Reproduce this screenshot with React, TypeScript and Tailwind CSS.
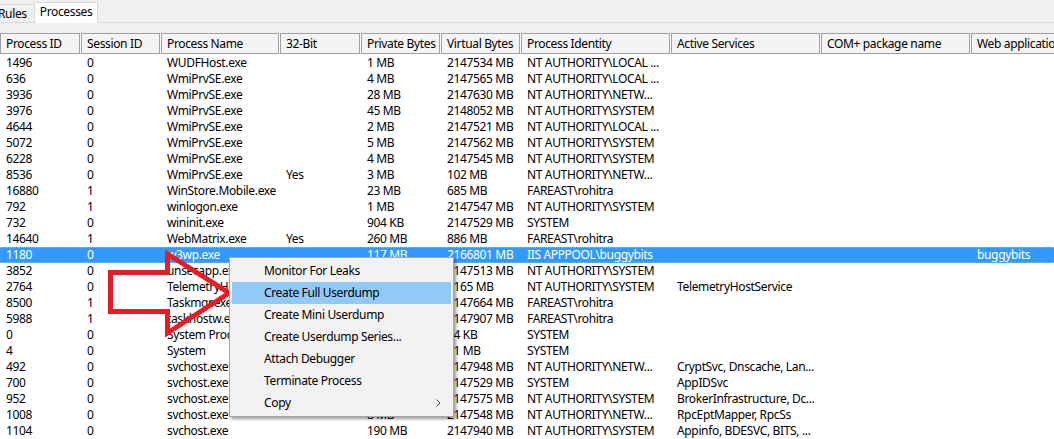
import React from "react";

type Row = {
  pid: string;
  sid: string;
  name: string;
  bit?: string;
  priv?: string;
  virt: string;
  ident: string;
  svc?: string;
  web?: string;
  sel?: boolean;
};

const rows: Row[] = [
  { pid: "1496", sid: "0", name: "WUDFHost.exe", priv: "1 MB", virt: "2147534 MB", ident: "NT AUTHORITY\\LOCAL ..." },
  { pid: "636", sid: "0", name: "WmiPrvSE.exe", priv: "4 MB", virt: "2147565 MB", ident: "NT AUTHORITY\\LOCAL ..." },
  { pid: "3936", sid: "0", name: "WmiPrvSE.exe", priv: "28 MB", virt: "2147630 MB", ident: "NT AUTHORITY\\NETW..." },
  { pid: "3976", sid: "0", name: "WmiPrvSE.exe", priv: "45 MB", virt: "2148052 MB", ident: "NT AUTHORITY\\SYSTEM" },
  { pid: "4644", sid: "0", name: "WmiPrvSE.exe", priv: "2 MB", virt: "2147521 MB", ident: "NT AUTHORITY\\LOCAL ..." },
  { pid: "5072", sid: "0", name: "WmiPrvSE.exe", priv: "5 MB", virt: "2147562 MB", ident: "NT AUTHORITY\\SYSTEM" },
  { pid: "6228", sid: "0", name: "WmiPrvSE.exe", priv: "4 MB", virt: "2147545 MB", ident: "NT AUTHORITY\\SYSTEM" },
  { pid: "8536", sid: "0", name: "WmiPrvSE.exe", bit: "Yes", priv: "3 MB", virt: "102 MB", ident: "NT AUTHORITY\\NETW..." },
  { pid: "16880", sid: "1", name: "WinStore.Mobile.exe", priv: "23 MB", virt: "685 MB", ident: "FAREAST\\rohitra" },
  { pid: "792", sid: "1", name: "winlogon.exe", priv: "1 MB", virt: "2147547 MB", ident: "NT AUTHORITY\\SYSTEM" },
  { pid: "732", sid: "0", name: "wininit.exe", priv: "904 KB", virt: "2147529 MB", ident: "SYSTEM" },
  { pid: "14640", sid: "1", name: "WebMatrix.exe", bit: "Yes", priv: "260 MB", virt: "886 MB", ident: "FAREAST\\rohitra" },
  { pid: "1180", sid: "0", name: "w3wp.exe", priv: "117 MB", virt: "2166801 MB", ident: "IIS APPPOOL\\buggybits", web: "buggybits", sel: true },
  { pid: "3852", sid: "0", name: "unsecapp.exe", priv: "2 MB", virt: "2147513 MB", ident: "NT AUTHORITY\\SYSTEM" },
  { pid: "2764", sid: "0", name: "TelemetryHost.exe", priv: "3 MB", virt: "2165 MB", ident: "NT AUTHORITY\\SYSTEM", svc: "TelemetryHostService" },
  { pid: "8500", sid: "1", name: "Taskmgr.exe", priv: "19 MB", virt: "2147664 MB", ident: "FAREAST\\rohitra" },
  { pid: "5988", sid: "1", name: "taskhostw.exe", priv: "7 MB", virt: "2147907 MB", ident: "FAREAST\\rohitra" },
  { pid: "0", sid: "0", name: "System Process", priv: "0 KB", virt: "24 KB", ident: "SYSTEM" },
  { pid: "4", sid: "0", name: "System", priv: "1 MB", virt: "21 MB", ident: "SYSTEM" },
  { pid: "492", sid: "0", name: "svchost.exe", priv: "12 MB", virt: "2147948 MB", ident: "NT AUTHORITY\\NETW...", svc: "CryptSvc, Dnscache, Lan..." },
  { pid: "700", sid: "0", name: "svchost.exe", priv: "3 MB", virt: "2147529 MB", ident: "SYSTEM", svc: "AppIDSvc" },
  { pid: "952", sid: "0", name: "svchost.exe", priv: "21 MB", virt: "2147575 MB", ident: "NT AUTHORITY\\SYSTEM", svc: "BrokerInfrastructure, Dc..." },
  { pid: "1008", sid: "0", name: "svchost.exe", priv: "8 MB", virt: "2147548 MB", ident: "NT AUTHORITY\\NETW...", svc: "RpcEptMapper, RpcSs" },
  { pid: "1104", sid: "0", name: "svchost.exe", priv: "190 MB", virt: "2147940 MB", ident: "NT AUTHORITY\\SYSTEM", svc: "Appinfo, BDESVC, BITS, ..." },
];

const headers: { label: string; w: string }[] = [
  { label: "Process ID", w: "w-[81px]" },
  { label: "Session ID", w: "w-[80px]" },
  { label: "Process Name", w: "w-[119px]" },
  { label: "32-Bit", w: "w-[81px]" },
  { label: "Private Bytes", w: "w-[80px]" },
  { label: "Virtual Bytes", w: "w-[80px]" },
  { label: "Process Identity", w: "w-[150px]" },
  { label: "Active Services", w: "w-[150px]" },
  { label: "COM+ package name", w: "w-[150px]" },
  { label: "Web application", w: "w-[120px]" },
];

const menuItems = [
  "Monitor For Leaks",
  "Create Full Userdump",
  "Create Mini Userdump",
  "Create Userdump Series...",
  "Attach Debugger",
  "Terminate Process",
  "Copy",
];

function Cell({ w, children }: { w: string; children?: React.ReactNode }) {
  return (
    <div className={`${w} shrink-0 overflow-hidden whitespace-nowrap pl-[6px]`}>
      {children}
    </div>
  );
}

export default function App() {
  return (
    <div className="relative w-[1054px] h-[439px] overflow-hidden bg-white text-[12px] leading-[16px] tracking-[-0.35px] text-black font-['Segoe_UI','Noto_Sans',sans-serif]">
      {/* Tab strip */}
      <div className="h-[33px] bg-[#f0f0f0]">
        <div className="flex h-[23px] items-end border-b border-[#dadada]">
          <div className="-ml-[9px] flex h-[18px] items-center border border-b-0 border-[#d9d9d9] bg-[#f0f0f0] pl-[6px] pr-[8px] pt-[1px]">
            Rules
          </div>
          <div className="-mb-px -ml-[2px] flex h-[21px] items-center border border-b-0 border-[#d9d9d9] bg-white px-[5px] pb-[2px]">
            Processes
          </div>
        </div>
      </div>

      {/* Header */}
      <div className="flex h-[21px] bg-white">
        {headers.map((h, i) => (
          <div key={i} className={`${h.w} shrink-0 pr-px`}>
            <div className="h-full overflow-hidden whitespace-nowrap border border-[#a0a0a0] bg-[#f4f4f4] pl-[5px] leading-[19px]">
              {h.label}
            </div>
          </div>
        ))}
      </div>

      {/* Rows */}
      <div className="pt-[1px]">
        {rows.map((r, i) => (
          <div
            key={i}
            className={`flex h-[16px] ${
              r.sel
                ? "border-y border-dotted border-[#e0a860] bg-[#3399ff] text-white leading-[14px]"
                : ""
            }`}
          >
            <Cell w="w-[81px]">{r.pid}</Cell>
            <Cell w="w-[80px]">{r.sid}</Cell>
            <Cell w="w-[119px]">{r.name}</Cell>
            <Cell w="w-[81px]">{r.bit}</Cell>
            <Cell w="w-[80px]">{r.priv}</Cell>
            <Cell w="w-[80px]">{r.virt}</Cell>
            <Cell w="w-[150px]">{r.ident}</Cell>
            <Cell w="w-[150px]">{r.svc}</Cell>
            <Cell w="w-[150px]"></Cell>
            <Cell w="w-[120px]">{r.web}</Cell>
          </div>
        ))}
      </div>

      {/* Red arrow overlay */}
      <svg
        className="absolute left-0 top-0"
        width="260"
        height="439"
        viewBox="0 0 260 439"
      >
        <polygon
          points="110.5,272.5 167.5,272.5 167.5,254 229,293 167.5,333 167.5,311.5 110.5,311.5"
          fill="none"
          stroke="#e81c24"
          strokeWidth="5"
          strokeLinejoin="miter"
        />
      </svg>

      {/* Context menu */}
      <div className="absolute left-[229px] top-[257px] w-[225px] border border-[#a8a8a8] bg-[#f2f2f2] py-[2px] shadow-[2px_2px_3px_rgba(0,0,0,0.4)]">
        {menuItems.map((m, i) => (
          <div
            key={i}
            className={`mx-[2px] flex h-[22px] items-center justify-between pl-[32px] pr-[10px] ${
              i === 1 ? "bg-[#91c9f7]" : ""
            }`}
          >
            <span>{m}</span>
            {m === "Copy" && (
              <svg width="5" height="8" viewBox="0 0 5 8">
                <path d="M0.5 0.5 L4 4 L0.5 7.5" fill="none" stroke="#444" strokeWidth="1" />
              </svg>
            )}
          </div>
        ))}
      </div>
    </div>
  );
}
